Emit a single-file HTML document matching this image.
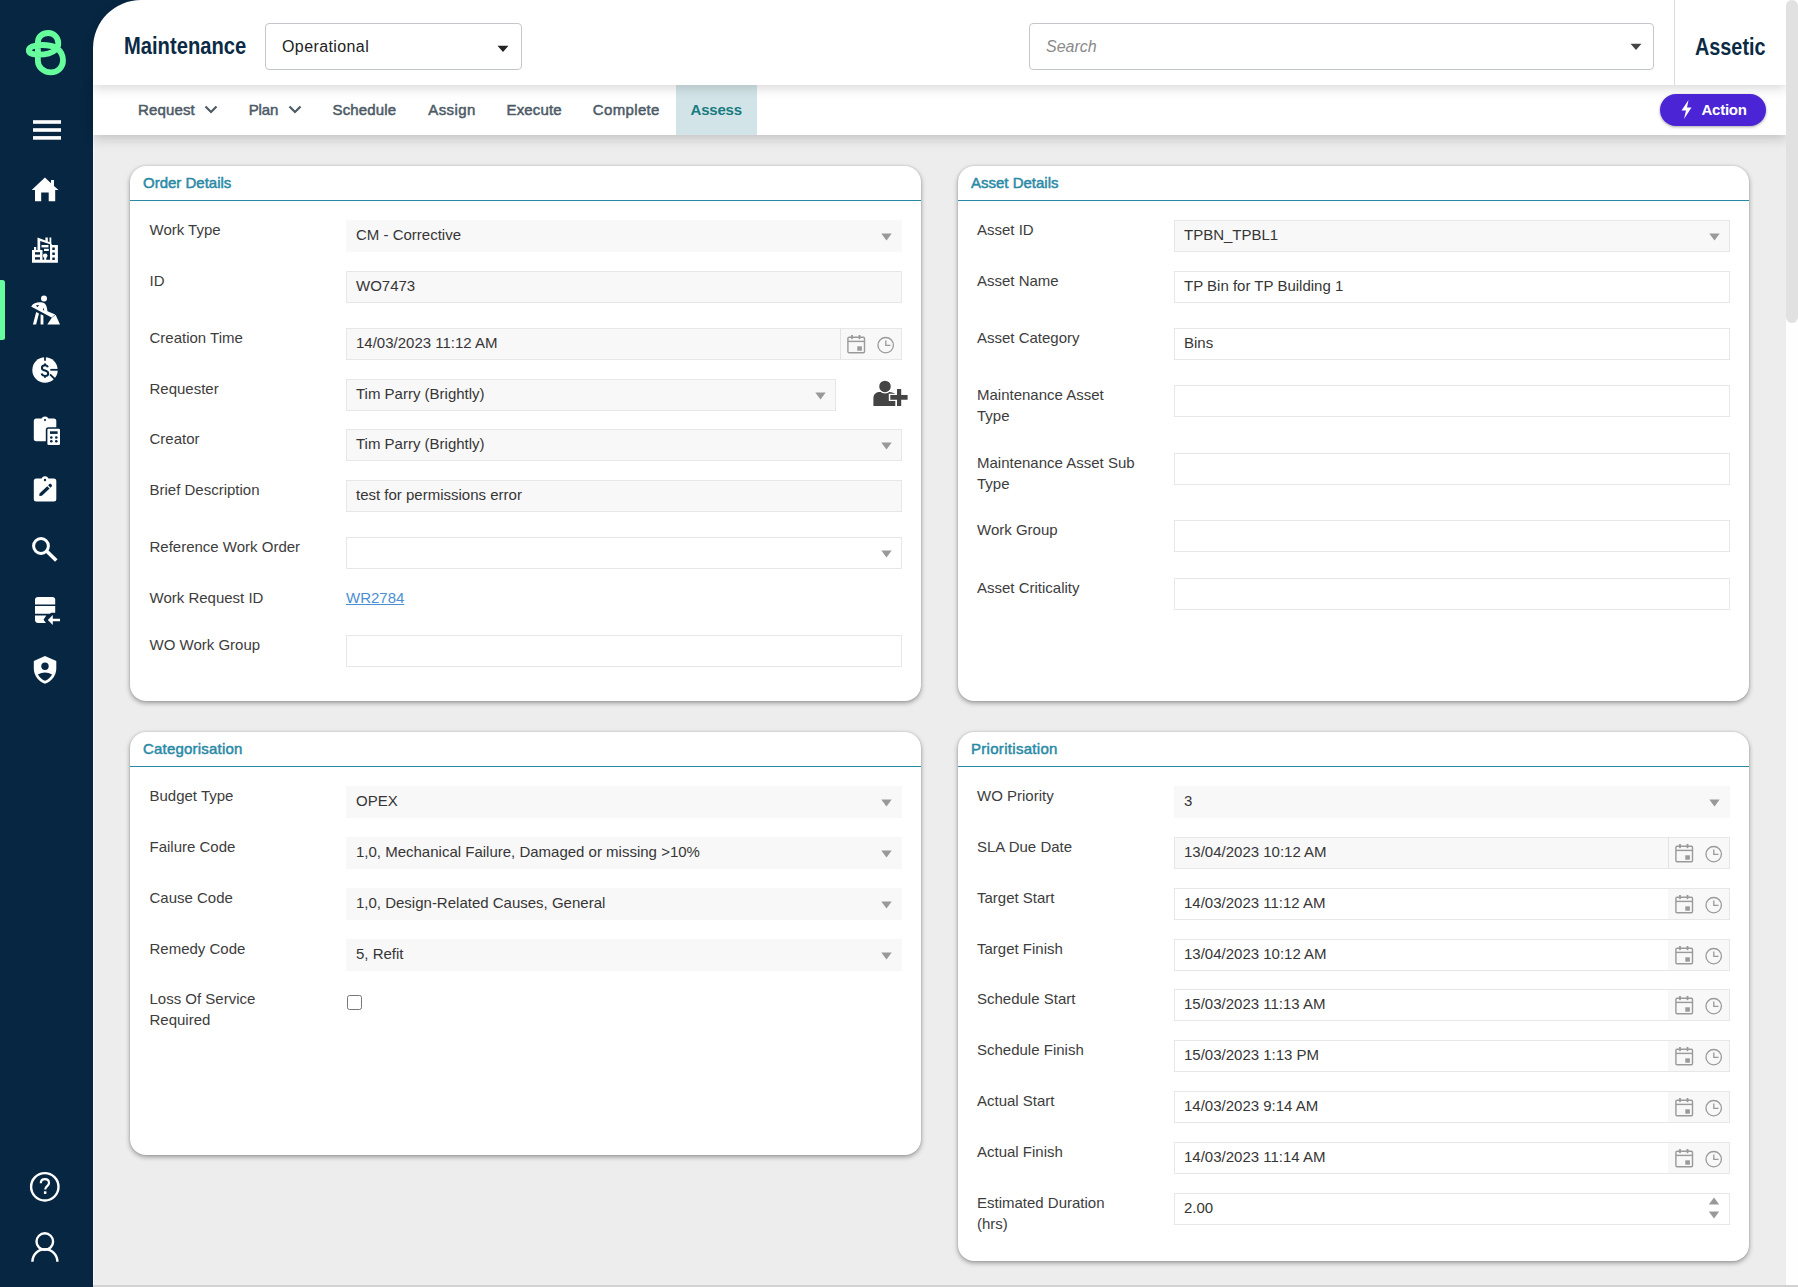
<!DOCTYPE html><html><head><meta charset="utf-8"><title>Maintenance</title><style>
*{box-sizing:border-box;margin:0;padding:0}
html,body{width:1798px;height:1287px;overflow:hidden;background:#ededed;font-family:"Liberation Sans",sans-serif;position:relative}
.a{position:absolute}
#side{left:0;top:0;width:93px;height:1287px;background:#072642}
#sideline{left:93px;top:0;width:1px;height:1287px;background:#f7f7f7}
#hdr{left:93px;top:0;width:1693px;height:85px;background:#fff;border-top-left-radius:48px;z-index:3;box-shadow:0 3px 12px rgba(0,0,0,0.16)}
#tabs{left:93px;top:85px;width:1693px;height:50px;background:#fff;z-index:2;box-shadow:0 3px 12px rgba(0,0,0,0.2)}
#sb{left:1786px;top:0;width:12px;height:1287px;background:#fefefe;z-index:5}
#thumb{left:1786px;top:0;width:12px;height:323px;background:#e1e1e1;border-radius:6px;z-index:6}
#bline{left:93px;top:1285px;width:1705px;height:2px;background:#d2d2d2;z-index:7}
.t{white-space:nowrap;line-height:20px}
.card{background:#fff;border-radius:16px;box-shadow:0 2px 5px rgba(0,0,0,0.36),0 0 2px rgba(0,0,0,0.15)}
.ctitle{font-size:15px;font-weight:400;color:#2a8aa6;-webkit-text-stroke:0.5px #2a8aa6}
.cline{height:1.5px;background:#2a8aa6}
.lbl{font-size:15px;color:#3d3d3d;line-height:21px}
.box{height:32px;background:#f8f8f8}
.bd{border:1px solid #e7e7e7}
.wh{background:#fff}
.val{position:absolute;left:10px;top:5px;font-size:15px;color:#363636;line-height:20px;white-space:nowrap}
.bd .val{left:9px;top:4px}
.nav{font-size:15px;color:#4d5a66;font-weight:400;-webkit-text-stroke:0.5px #4d5a66;letter-spacing:0.15px}
</style></head><body>
<div class="a" id="side"></div>
<div class="a" id="sideline"></div>
<div class="a" style="left:93px;top:0;width:60px;height:60px;background:#072642"></div>
<div class="a" id="hdr"></div>
<div class="a" id="tabs"></div>
<div class="a" id="sb"></div><div class="a" id="thumb"></div><div class="a" id="bline"></div>
<div class="a t" style="left:123.5px;top:33px;font-size:23px;font-weight:700;color:#0a2a45;line-height:26px;z-index:4;transform:scaleX(0.877);transform-origin:0 0">Maintenance</div>
<div class="a" style="left:265px;top:23px;width:257px;height:47px;border:1px solid #c3c7cb;border-radius:4px;z-index:4"></div>
<div class="a t" style="left:282px;top:37px;font-size:16px;color:#222;letter-spacing:0.4px;z-index:4">Operational</div>
<svg class="a" style="left:497px;top:45px;z-index:4" width="12" height="8"><path d="M0.5 0.8 L11.5 0.8 L6 7 Z" fill="#222"/></svg>
<div class="a" style="left:1029px;top:23px;width:625px;height:47px;border:1px solid #c3c7cb;border-radius:4px;z-index:4"></div>
<div class="a t" style="left:1046px;top:37px;font-size:16px;font-style:italic;color:#8a8a8a;z-index:4">Search</div>
<svg class="a" style="left:1630px;top:43px;z-index:4" width="12" height="8"><path d="M0.5 0.8 L11.5 0.8 L6 7 Z" fill="#444"/></svg>
<div class="a" style="left:1674px;top:0;width:1px;height:85px;background:#dcdcdc;z-index:4"></div>
<div class="a t" style="left:1695px;top:34px;font-size:23px;font-weight:700;color:#0a2a45;line-height:26px;z-index:4;transform:scaleX(0.862);transform-origin:0 0">Assetic</div>
<div class="a" style="left:676px;top:85px;width:81px;height:50px;background:#d2e4e7;z-index:2"></div>
<div class="a t nav" style="left:138px;top:100px;z-index:3">Request</div>
<div class="a t nav" style="left:248.7px;top:100px;z-index:3;letter-spacing:-0.1px">Plan</div>
<div class="a t nav" style="left:332.5px;top:100px;z-index:3">Schedule</div>
<div class="a t nav" style="left:428.3px;top:100px;z-index:3;letter-spacing:0.38px">Assign</div>
<div class="a t nav" style="left:506.5px;top:100px;z-index:3">Execute</div>
<div class="a t nav" style="left:592.8px;top:100px;z-index:3;letter-spacing:0.35px">Complete</div>
<div class="a t" style="left:690.5px;top:100px;z-index:3;font-size:15px;font-weight:700;color:#177b80;letter-spacing:-0.2px">Assess</div>
<svg class="a" style="left:203.5px;top:105px;z-index:3" width="14" height="10"><path d="M1.5 1.5 L7 7 L12.5 1.5" fill="none" stroke="#4d5a66" stroke-width="2.2"/></svg>
<svg class="a" style="left:287.5px;top:105px;z-index:3" width="14" height="10"><path d="M1.5 1.5 L7 7 L12.5 1.5" fill="none" stroke="#4d5a66" stroke-width="2.2"/></svg>
<div class="a" style="left:1660px;top:94px;width:106px;height:32px;border-radius:16px;background:#4b25d5;box-shadow:0 1px 3px rgba(0,0,0,0.35);z-index:3"></div>
<svg class="a" style="left:1680px;top:99px;z-index:4" width="13" height="21"><path d="M8.5 1 L1.5 11.5 L6 11.5 L4 20 L11.5 8.5 L7 8.5 Z" fill="#fff"/></svg>
<div class="a t" style="left:1701.5px;top:100px;font-size:15px;font-weight:700;color:#fff;letter-spacing:-0.25px;z-index:4">Action</div>

<svg class="a" style="left:0;top:0;z-index:1" width="93" height="1287" viewBox="0 0 93 1287">
 <path d="M37.9 61 L37.9 42 C37.9 36.5 42.5 33 48.2 33 C54 33 58.3 37.5 58.3 43.4 C58.3 46 57.5 48 55.5 49.8 C52 53 45 54.6 38.5 54.6 C32.5 54.6 28.8 52.8 28.8 50.2 C28.8 47.2 34 45 42 45 C48 45 53.5 46 57 48.3 C60.8 51 63 55 63 60.5 C63 67.5 57.5 72.4 50.8 72.4 C43.5 72.4 37.9 67 37.9 61 Z" fill="none" stroke="#67ff9e" stroke-width="5.8"/>
 <rect x="0" y="280" width="5" height="60" rx="2.5" fill="#68fd9f"/>
 <rect x="-3" y="280" width="5" height="60" fill="#68fd9f"/>
 <g fill="#fff">
  <rect x="33" y="120.2" width="28" height="3.6"/><rect x="33" y="128.2" width="28" height="3.6"/><rect x="33" y="136.1" width="28" height="3.6"/>
  <path d="M31.7 190 L44.9 177.6 L51 183.3 L51 180 L54 180 L54 186.1 L58.5 190 L55.2 190 L55.2 201.3 L48.7 201.3 L48.7 192.4 L41.2 192.4 L41.2 201.3 L35 201.3 L35 190 Z"/>
  <path d="M32 262.7 L32 250 L34 250 L34 247 L36.2 247 L36.2 250 L37.5 250 L37.5 237.4 L45.4 240.5 L45.4 237.4 L47.8 237.4 L47.8 241.5 L49.5 242 L49.5 237.4 L51.3 237.4 L51.3 243.6 L52.2 245 L57.9 245 L57.9 262.7 Z"/>
 </g>
 <g fill="#072642">
  <path d="M40.2 250 L40.2 241 L50 244.2 L50 259.8 L42.5 259.8 L42.5 250 Z"/>
  <rect x="35" y="252.2" width="5" height="2.4"/><rect x="35" y="257.2" width="5" height="2.4"/>
  <rect x="52.3" y="247.5" width="2.5" height="2.5"/><rect x="52.3" y="252.5" width="2.5" height="2.5"/><rect x="52.3" y="257.5" width="2.5" height="2.5"/>
 </g>
 <g fill="#fff">
  <rect x="41.5" y="245" width="7" height="2.4"/><rect x="44" y="248.8" width="4.8" height="2.2"/>
  <circle cx="45.2" cy="255.8" r="2.3"/><rect x="44.2" y="256" width="2" height="4"/>
 </g>
 <g fill="#fff">
  <circle cx="44" cy="298.4" r="3"/>
  <path d="M31.3 306.3 C33 303 37 302 41 302.3 C44.5 302.6 46.2 304.5 46.8 307.5 L47.5 311.2 L55.2 314.6 L51.6 317.5 L31.5 306.8 Z"/>
  <path d="M36.2 312 L39 313.5 L36.1 324.6 L32.9 324.6 Z"/>
  <path d="M40.6 314.2 L43.4 315.6 L43.4 324.6 L40.6 324.6 Z"/>
  <path d="M47.3 324.6 L51.8 317.8 L55.6 314.8 L60 324.6 Z"/>
 </g>
 <path d="M36 305.3 L39.2 304.9 L37.3 307.2 Z M43.2 307.6 L44.2 310.3 L42.9 310.3 Z" fill="#072642"/>
 <circle cx="45" cy="370" r="12.7" fill="#fff"/>
 <g stroke="#072642" stroke-width="1.8" fill="none">
  <path d="M45 356.5 L45 360.8"/><path d="M50.3 369.8 L58.5 369.8"/><path d="M50 374.3 L54.8 379"/>
 </g>
 <path d="M47.8 367.3 C47.4 366 46.4 365.3 45 365.3 C43.2 365.3 41.9 366.3 41.9 367.9 C41.9 369.6 43.4 370.1 45 370.5 C46.8 371 48.2 371.6 48.2 373.4 C48.2 375 46.8 375.9 45 375.9 C43.3 375.9 42 375.1 41.6 373.6 M45 363.6 L45 365.6 M45 375.6 L45 377.8" fill="none" stroke="#072642" stroke-width="2"/>
 <g fill="#fff">
  <rect x="33.8" y="418.6" width="22.5" height="22.7" rx="2.5"/>
  <circle cx="45" cy="420" r="3.6"/>
 </g>
 <circle cx="45" cy="420" r="1.1" fill="#072642"/>
 <rect x="45.8" y="427.2" width="15.8" height="19.4" rx="2.5" fill="#072642"/>
 <rect x="47.4" y="428.8" width="12.6" height="16.2" rx="1.2" fill="#fff"/>
 <g fill="#072642">
  <rect x="50" y="431.3" width="7.6" height="2.6"/>
  <circle cx="51.3" cy="437.5" r="1.3"/><circle cx="56.3" cy="437.5" r="1.3"/><circle cx="51.3" cy="441.3" r="1.3"/><circle cx="56.3" cy="441.3" r="1.3"/>
 </g>
 <g fill="#fff">
  <rect x="33.8" y="478.6" width="22.5" height="22.8" rx="2.5"/>
  <circle cx="45" cy="479.8" r="3.5"/>
 </g>
 <circle cx="45" cy="480" r="1.2" fill="#072642"/>
 <path d="M39.3 496 L39.5 493.4 L47.2 486.2 L49.6 488.6 L41.9 495.8 Z M48.1 485.3 L49.4 484.1 C49.9 483.7 50.5 483.7 51 484.1 L51.7 484.8 C52.1 485.3 52.1 485.9 51.7 486.4 L50.5 487.7 Z" fill="#072642"/>
 <g fill="none" stroke="#fff">
  <circle cx="41" cy="546" r="7.4" stroke-width="3"/>
 </g>
 <path d="M46.8 551.2 L56.3 560.5" stroke="#fff" stroke-width="3.6" fill="none"/>
 <g fill="#fff">
  <path d="M35 604.5 L35 599.5 C35 598 36.3 597 37.8 597 L52.5 597 C54 597 55.2 598 55.2 599.5 L55.2 604.5 Z"/>
  <path d="M35 606 L55.2 606 L55.2 612.7 L52 612.7 C51 612.7 50.5 613 50 613.7 L35 613.7 Z"/>
  <path d="M35 615.5 L46.3 615.5 L43.5 619.8 L46 622.9 L37.8 622.9 C36.2 622.9 35 621.7 35 620 Z"/>
  <path d="M47.8 620 L52.8 615 L52.8 618.8 L60 618.8 L60 621.2 L52.8 621.2 L52.8 625 Z"/>
 </g>
 <path d="M45 655.9 L56.3 661 L56.3 668.5 C56.3 675.5 51.5 681.5 45 683.8 C38.5 681.5 33.8 675.5 33.8 668.5 L33.8 661 Z" fill="#fff"/>
 <circle cx="45" cy="666.2" r="3.7" fill="#072642"/>
 <path d="M37.9 674.4 Q45 670.5 52.1 674.4 Q49 679.3 45 680.8 Q41 679.3 37.9 674.4 Z" fill="#072642"/>
 <circle cx="44.8" cy="1186.8" r="13.7" fill="none" stroke="#fff" stroke-width="2.4"/>
 <path d="M40.8 1183.3 C40.8 1180.8 42.6 1179.2 44.9 1179.2 C47.3 1179.2 49 1180.8 49 1183 C49 1186 45.2 1186.2 45.2 1189.5" fill="none" stroke="#fff" stroke-width="2.2"/>
 <rect x="43.9" y="1191.3" width="2.5" height="2.6" fill="#fff"/>
 <circle cx="44.8" cy="1241.6" r="8.3" fill="none" stroke="#fff" stroke-width="2.4"/>
 <path d="M32.4 1261.8 A12.5 12.5 0 0 1 57.4 1261.8" fill="none" stroke="#fff" stroke-width="2.4"/>
</svg>

<div class="a card" style="left:130px;top:166px;width:791px;height:535px"></div>
<div class="a t ctitle" style="left:143px;top:173px;letter-spacing:0px">Order Details</div>
<div class="a cline" style="left:130px;top:199.5px;width:791px"></div>
<div class="a card" style="left:958px;top:166px;width:791px;height:535px"></div>
<div class="a t ctitle" style="left:971px;top:173px;letter-spacing:0px">Asset Details</div>
<div class="a cline" style="left:958px;top:199.5px;width:791px"></div>
<div class="a card" style="left:130px;top:732px;width:791px;height:423px"></div>
<div class="a t ctitle" style="left:143px;top:739px;letter-spacing:0.2px">Categorisation</div>
<div class="a cline" style="left:130px;top:765.5px;width:791px"></div>
<div class="a card" style="left:958px;top:732px;width:791px;height:529px"></div>
<div class="a t ctitle" style="left:971px;top:739px;letter-spacing:0.3px">Prioritisation</div>
<div class="a cline" style="left:958px;top:765.5px;width:791px"></div>
<div class="a lbl t" style="left:149.5px;top:219px">Work Type</div>
<div class="a box" style="left:346px;top:220px;width:556px"><span class="val">CM - Corrective</span></div>
<svg class="a" style="left:881px;top:233px" width="11" height="8"><path d="M0.3 0.5 L10.7 0.5 L5.5 7.5 Z" fill="#999"/></svg>
<div class="a lbl t" style="left:149.5px;top:270px">ID</div>
<div class="a box bd" style="left:346px;top:271px;width:556px"><span class="val">WO7473</span></div>
<div class="a lbl t" style="left:149.5px;top:327px">Creation Time</div>
<div class="a box bd" style="left:346px;top:328px;width:556px;background:#f8f8f8"><span class="val">14/03/2023 11:12 AM</span></div>
<div class="a" style="left:840px;top:329px;width:61px;height:30px;background:#f8f8f8"></div>
<div class="a" style="left:840px;top:328px;width:1px;height:32px;background:#e3e3e3"></div>
<svg class="a" style="left:847px;top:335px" width="50" height="20" viewBox="0 0 50 20">
<g fill="none" stroke="#9a9a9a" stroke-width="1.4">
<rect x="0.9" y="2.3" width="16.6" height="15.5" rx="1.2"/><path d="M0.9 6.4 L17.5 6.4"/><path d="M5 0.6 L5 3.2 M12.5 0.6 L12.5 3.2" stroke-width="1.9" stroke-linecap="round"/>
<circle cx="38.7" cy="10.2" r="7.7" stroke-width="1.3"/><path d="M38.8 5.6 L38.8 10.4 L43.5 10.4" stroke-width="1.3"/>
</g><rect x="10.3" y="11.3" width="4.6" height="4.4" fill="#9a9a9a"/></svg>
<div class="a lbl t" style="left:149.5px;top:378px">Requester</div>
<div class="a box bd" style="left:346px;top:379px;width:490px"><span class="val">Tim Parry (Brightly)</span></div>
<svg class="a" style="left:815px;top:392px" width="11" height="8"><path d="M0.3 0.5 L10.7 0.5 L5.5 7.5 Z" fill="#999"/></svg>
<div class="a lbl t" style="left:149.5px;top:428px">Creator</div>
<div class="a box bd" style="left:346px;top:429px;width:556px"><span class="val">Tim Parry (Brightly)</span></div>
<svg class="a" style="left:881px;top:442px" width="11" height="8"><path d="M0.3 0.5 L10.7 0.5 L5.5 7.5 Z" fill="#999"/></svg>
<div class="a lbl t" style="left:149.5px;top:479px">Brief Description</div>
<div class="a box bd" style="left:346px;top:480px;width:556px"><span class="val">test for permissions error</span></div>
<div class="a lbl t" style="left:149.5px;top:536px">Reference Work Order</div>
<div class="a box bd" style="left:346px;top:537px;width:556px;background:#fff"></div>
<svg class="a" style="left:881px;top:550px" width="11" height="8"><path d="M0.3 0.5 L10.7 0.5 L5.5 7.5 Z" fill="#999"/></svg>
<div class="a lbl t" style="left:149.5px;top:587px">Work Request ID</div>
<div class="a t" style="left:346px;top:587px;font-size:15px;color:#4a8fd3;text-decoration:underline;line-height:21.5px">WR2784</div>
<div class="a lbl t" style="left:149.5px;top:634px">WO Work Group</div>
<div class="a box bd" style="left:346px;top:635px;width:556px;background:#fff"></div>
<svg class="a" style="left:872px;top:379px" width="37" height="29" viewBox="0 0 37 29">
<path d="M1.4 27 L1.4 19 C1.4 15.5 4 13 7.5 13 L17.5 13 C20 13 22 14 23.5 15.2 L23.5 27 Z" fill="#444"/>
<circle cx="13" cy="7.4" r="6.4" fill="#444" stroke="#fff" stroke-width="1.3"/>
<path d="M16.8 14.7 L23.6 14.7 L23.6 8.6 L30.6 8.6 L30.6 14.7 L37 14.7 L37 22.1 L30.6 22.1 L30.6 28.5 L23.6 28.5 L23.6 22.1 L16.8 22.1 Z" fill="#fff"/>
<path d="M18.3 16.1 L25 16.1 L25 10 L29.2 10 L29.2 16.1 L35.6 16.1 L35.6 20.7 L29.2 20.7 L29.2 27 L25 27 L25 20.7 L18.3 20.7 Z" fill="#444"/>
</svg>
<div class="a lbl t" style="left:977px;top:219px">Asset ID</div>
<div class="a box bd" style="left:1174px;top:220px;width:556px"><span class="val">TPBN_TPBL1</span></div>
<svg class="a" style="left:1709px;top:233px" width="11" height="8"><path d="M0.3 0.5 L10.7 0.5 L5.5 7.5 Z" fill="#999"/></svg>
<div class="a lbl t" style="left:977px;top:270px">Asset Name</div>
<div class="a box bd" style="left:1174px;top:271px;width:556px;background:#fff"><span class="val">TP Bin for TP Building 1</span></div>
<div class="a lbl t" style="left:977px;top:327px">Asset Category</div>
<div class="a box bd" style="left:1174px;top:328px;width:556px;background:#fff"><span class="val">Bins</span></div>
<div class="a lbl t" style="left:977px;top:384px">Maintenance Asset<br>Type</div>
<div class="a box bd" style="left:1174px;top:385px;width:556px;background:#fff"></div>
<div class="a lbl t" style="left:977px;top:452px">Maintenance Asset Sub<br>Type</div>
<div class="a box bd" style="left:1174px;top:453px;width:556px;background:#fff"></div>
<div class="a lbl t" style="left:977px;top:519px">Work Group</div>
<div class="a box bd" style="left:1174px;top:520px;width:556px;background:#fff"></div>
<div class="a lbl t" style="left:977px;top:577px">Asset Criticality</div>
<div class="a box bd" style="left:1174px;top:578px;width:556px;background:#fff"></div>
<div class="a lbl t" style="left:149.5px;top:785px">Budget Type</div>
<div class="a box" style="left:346px;top:786px;width:556px"><span class="val">OPEX</span></div>
<svg class="a" style="left:881px;top:799px" width="11" height="8"><path d="M0.3 0.5 L10.7 0.5 L5.5 7.5 Z" fill="#999"/></svg>
<div class="a lbl t" style="left:149.5px;top:836px">Failure Code</div>
<div class="a box" style="left:346px;top:837px;width:556px"><span class="val">1,0, Mechanical Failure, Damaged or missing &gt;10%</span></div>
<svg class="a" style="left:881px;top:850px" width="11" height="8"><path d="M0.3 0.5 L10.7 0.5 L5.5 7.5 Z" fill="#999"/></svg>
<div class="a lbl t" style="left:149.5px;top:887px">Cause Code</div>
<div class="a box" style="left:346px;top:888px;width:556px"><span class="val">1,0, Design-Related Causes, General</span></div>
<svg class="a" style="left:881px;top:901px" width="11" height="8"><path d="M0.3 0.5 L10.7 0.5 L5.5 7.5 Z" fill="#999"/></svg>
<div class="a lbl t" style="left:149.5px;top:938px">Remedy Code</div>
<div class="a box" style="left:346px;top:939px;width:556px"><span class="val">5, Refit</span></div>
<svg class="a" style="left:881px;top:952px" width="11" height="8"><path d="M0.3 0.5 L10.7 0.5 L5.5 7.5 Z" fill="#999"/></svg>
<div class="a lbl t" style="left:149.5px;top:988px">Loss Of Service<br>Required</div>
<div class="a" style="left:346.5px;top:994.5px;width:15px;height:15px;border:1.3px solid #767676;border-radius:2.5px;background:#fff"></div>
<div class="a lbl t" style="left:977px;top:785px">WO Priority</div>
<div class="a box" style="left:1174px;top:786px;width:556px"><span class="val">3</span></div>
<svg class="a" style="left:1709px;top:799px" width="11" height="8"><path d="M0.3 0.5 L10.7 0.5 L5.5 7.5 Z" fill="#999"/></svg>
<div class="a lbl t" style="left:977px;top:836px">SLA Due Date</div>
<div class="a box bd" style="left:1174px;top:837px;width:556px;background:#f8f8f8"><span class="val">13/04/2023 10:12 AM</span></div>
<div class="a" style="left:1668px;top:838px;width:61px;height:30px;background:#f8f8f8"></div>
<div class="a" style="left:1668px;top:837px;width:1px;height:32px;background:#e3e3e3"></div>
<svg class="a" style="left:1675px;top:844px" width="50" height="20" viewBox="0 0 50 20">
<g fill="none" stroke="#9a9a9a" stroke-width="1.4">
<rect x="0.9" y="2.3" width="16.6" height="15.5" rx="1.2"/><path d="M0.9 6.4 L17.5 6.4"/><path d="M5 0.6 L5 3.2 M12.5 0.6 L12.5 3.2" stroke-width="1.9" stroke-linecap="round"/>
<circle cx="38.7" cy="10.2" r="7.7" stroke-width="1.3"/><path d="M38.8 5.6 L38.8 10.4 L43.5 10.4" stroke-width="1.3"/>
</g><rect x="10.3" y="11.3" width="4.6" height="4.4" fill="#9a9a9a"/></svg>
<div class="a lbl t" style="left:977px;top:887px">Target Start</div>
<div class="a box bd" style="left:1174px;top:888px;width:556px;background:#fff"><span class="val">14/03/2023 11:12 AM</span></div>
<div class="a" style="left:1668px;top:889px;width:61px;height:30px;background:#f8f8f8"></div>
<svg class="a" style="left:1675px;top:895px" width="50" height="20" viewBox="0 0 50 20">
<g fill="none" stroke="#9a9a9a" stroke-width="1.4">
<rect x="0.9" y="2.3" width="16.6" height="15.5" rx="1.2"/><path d="M0.9 6.4 L17.5 6.4"/><path d="M5 0.6 L5 3.2 M12.5 0.6 L12.5 3.2" stroke-width="1.9" stroke-linecap="round"/>
<circle cx="38.7" cy="10.2" r="7.7" stroke-width="1.3"/><path d="M38.8 5.6 L38.8 10.4 L43.5 10.4" stroke-width="1.3"/>
</g><rect x="10.3" y="11.3" width="4.6" height="4.4" fill="#9a9a9a"/></svg>
<div class="a lbl t" style="left:977px;top:938px">Target Finish</div>
<div class="a box bd" style="left:1174px;top:939px;width:556px;background:#fff"><span class="val">13/04/2023 10:12 AM</span></div>
<div class="a" style="left:1668px;top:940px;width:61px;height:30px;background:#f8f8f8"></div>
<svg class="a" style="left:1675px;top:946px" width="50" height="20" viewBox="0 0 50 20">
<g fill="none" stroke="#9a9a9a" stroke-width="1.4">
<rect x="0.9" y="2.3" width="16.6" height="15.5" rx="1.2"/><path d="M0.9 6.4 L17.5 6.4"/><path d="M5 0.6 L5 3.2 M12.5 0.6 L12.5 3.2" stroke-width="1.9" stroke-linecap="round"/>
<circle cx="38.7" cy="10.2" r="7.7" stroke-width="1.3"/><path d="M38.8 5.6 L38.8 10.4 L43.5 10.4" stroke-width="1.3"/>
</g><rect x="10.3" y="11.3" width="4.6" height="4.4" fill="#9a9a9a"/></svg>
<div class="a lbl t" style="left:977px;top:988px">Schedule Start</div>
<div class="a box bd" style="left:1174px;top:989px;width:556px;background:#fff"><span class="val">15/03/2023 11:13 AM</span></div>
<div class="a" style="left:1668px;top:990px;width:61px;height:30px;background:#f8f8f8"></div>
<svg class="a" style="left:1675px;top:996px" width="50" height="20" viewBox="0 0 50 20">
<g fill="none" stroke="#9a9a9a" stroke-width="1.4">
<rect x="0.9" y="2.3" width="16.6" height="15.5" rx="1.2"/><path d="M0.9 6.4 L17.5 6.4"/><path d="M5 0.6 L5 3.2 M12.5 0.6 L12.5 3.2" stroke-width="1.9" stroke-linecap="round"/>
<circle cx="38.7" cy="10.2" r="7.7" stroke-width="1.3"/><path d="M38.8 5.6 L38.8 10.4 L43.5 10.4" stroke-width="1.3"/>
</g><rect x="10.3" y="11.3" width="4.6" height="4.4" fill="#9a9a9a"/></svg>
<div class="a lbl t" style="left:977px;top:1039px">Schedule Finish</div>
<div class="a box bd" style="left:1174px;top:1040px;width:556px;background:#fff"><span class="val">15/03/2023 1:13 PM</span></div>
<div class="a" style="left:1668px;top:1041px;width:61px;height:30px;background:#f8f8f8"></div>
<svg class="a" style="left:1675px;top:1047px" width="50" height="20" viewBox="0 0 50 20">
<g fill="none" stroke="#9a9a9a" stroke-width="1.4">
<rect x="0.9" y="2.3" width="16.6" height="15.5" rx="1.2"/><path d="M0.9 6.4 L17.5 6.4"/><path d="M5 0.6 L5 3.2 M12.5 0.6 L12.5 3.2" stroke-width="1.9" stroke-linecap="round"/>
<circle cx="38.7" cy="10.2" r="7.7" stroke-width="1.3"/><path d="M38.8 5.6 L38.8 10.4 L43.5 10.4" stroke-width="1.3"/>
</g><rect x="10.3" y="11.3" width="4.6" height="4.4" fill="#9a9a9a"/></svg>
<div class="a lbl t" style="left:977px;top:1090px">Actual Start</div>
<div class="a box bd" style="left:1174px;top:1091px;width:556px;background:#fff"><span class="val">14/03/2023 9:14 AM</span></div>
<div class="a" style="left:1668px;top:1092px;width:61px;height:30px;background:#f8f8f8"></div>
<svg class="a" style="left:1675px;top:1098px" width="50" height="20" viewBox="0 0 50 20">
<g fill="none" stroke="#9a9a9a" stroke-width="1.4">
<rect x="0.9" y="2.3" width="16.6" height="15.5" rx="1.2"/><path d="M0.9 6.4 L17.5 6.4"/><path d="M5 0.6 L5 3.2 M12.5 0.6 L12.5 3.2" stroke-width="1.9" stroke-linecap="round"/>
<circle cx="38.7" cy="10.2" r="7.7" stroke-width="1.3"/><path d="M38.8 5.6 L38.8 10.4 L43.5 10.4" stroke-width="1.3"/>
</g><rect x="10.3" y="11.3" width="4.6" height="4.4" fill="#9a9a9a"/></svg>
<div class="a lbl t" style="left:977px;top:1141px">Actual Finish</div>
<div class="a box bd" style="left:1174px;top:1142px;width:556px;background:#fff"><span class="val">14/03/2023 11:14 AM</span></div>
<div class="a" style="left:1668px;top:1143px;width:61px;height:30px;background:#f8f8f8"></div>
<svg class="a" style="left:1675px;top:1149px" width="50" height="20" viewBox="0 0 50 20">
<g fill="none" stroke="#9a9a9a" stroke-width="1.4">
<rect x="0.9" y="2.3" width="16.6" height="15.5" rx="1.2"/><path d="M0.9 6.4 L17.5 6.4"/><path d="M5 0.6 L5 3.2 M12.5 0.6 L12.5 3.2" stroke-width="1.9" stroke-linecap="round"/>
<circle cx="38.7" cy="10.2" r="7.7" stroke-width="1.3"/><path d="M38.8 5.6 L38.8 10.4 L43.5 10.4" stroke-width="1.3"/>
</g><rect x="10.3" y="11.3" width="4.6" height="4.4" fill="#9a9a9a"/></svg>
<div class="a lbl t" style="left:977px;top:1192px">Estimated Duration<br>(hrs)</div>
<div class="a box bd" style="left:1174px;top:1193px;width:556px;background:#fff"><span class="val">2.00</span></div>
<svg class="a" style="left:1708px;top:1197px" width="12" height="23"><path d="M0.8 7.5 L11.2 7.5 L6 0.5 Z M0.8 14.5 L11.2 14.5 L6 21.5 Z" fill="#999"/></svg>
</body></html>
